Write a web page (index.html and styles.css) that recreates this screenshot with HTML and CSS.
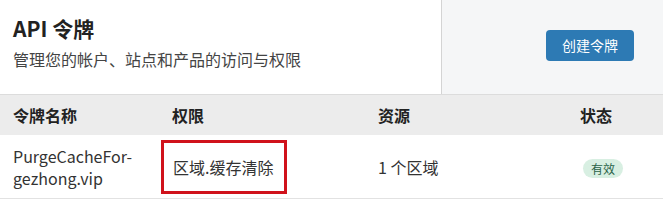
FILE: index.html
```html
<!DOCTYPE html>
<html lang="zh-CN">
<head>
    <meta charset="UTF-8">
    <title>API 令牌</title>
    <link rel="stylesheet" href="styles.css">
</head>
<body>

<div class="panel">
    <div class="top">
        <div class="intro">
            <h1>API 令牌</h1>
            <p>管理您的帐户、站点和产品的访问与权限</p>
        </div>
        <div class="actions">
            <div class="button">创建令牌</div>
        </div>
    </div>

    <div class="table">
        <div class="row head">
            <div class="cell">令牌名称</div>
            <div class="cell">权限</div>
            <div class="cell">资源</div>
            <div class="cell">状态</div>
        </div>
        <div class="row">
            <div class="cell name">PurgeCacheFor-<br>gezhong.vip</div>
            <div class="cell perm"><span class="mark">区域.缓存清除</span></div>
            <div class="cell">1 个区域</div>
            <div class="cell"><span class="badge">有效</span></div>
        </div>
    </div>
</div>

</body>
</html>
```

FILE: styles.css
```css
body {
    margin: 0;
    background: #fff;
    font-family: "Noto Sans CJK SC", "Noto Sans", sans-serif;
    color: #333;
}
.panel {
    width: 663px;
}
.top {
    display: flex;
    height: 94px;
    border-bottom: 1px solid #dcdcdc;
}
.intro {
    width: 428px;
    padding-left: 13px;
    border-right: 1px solid #d4d4d4;
}
h1 {
    margin: 13px 0 0;
    font-size: 21px;
    line-height: 30px;
    font-weight: bold;
    color: #222;
}
p {
    margin: 5px 0 0;
    font-size: 16px;
    line-height: 22px;
    color: #444;
}
.actions {
    flex: 1;
    background: #f5f6f7;
    display: flex;
    align-items: flex-start;
    padding: 30px 0 0 104px;
}
.button {
    width: 88px;
    height: 31px;
    line-height: 31px;
    text-align: center;
    background: #2d7ab4;
    color: #fff;
    font-size: 14px;
    border-radius: 4px;
}
.row {
    display: grid;
    grid-template-columns: 159px 206px 202px 1fr;
    align-items: center;
    height: 63px;
    border-bottom: 1px solid #e2e2e2;
    font-size: 16px;
}
.row.head {
    height: 40px;
    background: #ececec;
    border-bottom: none;
    font-weight: bold;
    color: #222;
}
.cell {
    padding-left: 13px;
}
.name {
    line-height: 22px;
}
.cell.perm {
    padding-left: 2px;
}
.mark {
    display: inline-block;
    width: 111px;
    height: 48px;
    line-height: 48px;
    padding-left: 9px;
    border: 3px solid #d0121b;
    font-size: 16px;
}
.badge {
    display: inline-block;
    margin-left: 3px;
    padding: 0 8px;
    height: 19px;
    line-height: 19px;
    border-radius: 10px;
    background: #d8efe2;
    color: #2a6248;
    font-size: 12px;
}
```
